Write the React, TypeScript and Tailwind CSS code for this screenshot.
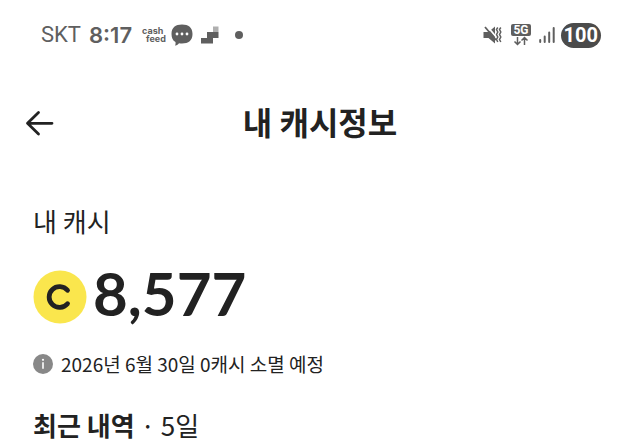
import React from 'react';

const StatusBar: React.FC = () => {
  return (
    <div className="flex items-center justify-between pl-[41px] pr-[39px] pt-5 text-[#5f5f5f]">
      <div className="flex items-center">
        <span className="font-[Roboto,sans-serif] text-[22px] leading-[30px]">SKT</span>
        <span className="ml-2 font-[Inter,sans-serif] text-[22px] leading-[30px] font-semibold">8:17</span>
        <div className="ml-[10px] flex flex-col font-[Inter,sans-serif] text-[9px] leading-[8px] font-bold">
          <span>cash</span>
          <span className="pl-1">feed</span>
        </div>
        <svg className="ml-[5px] h-[22px] w-[22px]" viewBox="0 0 22 22" aria-hidden="true">
          <path d="M11 .5C17.5.5 21.5 3.5 21.5 10c0 6.500-4 9.500-10.500 9.500-1 0-2-.1-3-.3-.8 1-1.900 1.900-3.800 2.500.4-1.200.5-2.400.3-3.600C1.700 16.500.5 13.700.5 10 .5 3.500 4.500.5 11 .5z" fill="currentColor" />
          <circle cx="6" cy="10" r="1.400" fill="#fff" />
          <circle cx="11" cy="10" r="1.400" fill="#fff" />
          <circle cx="16" cy="10" r="1.400" fill="#fff" />
        </svg>
        <svg className="ml-2 h-[18px] w-[18px]" viewBox="0 0 18 18" fill="currentColor" aria-hidden="true">
          <path d="M0 12h6V6h6v0h5.500v6H12v5.500H0z" />
          <path d="M12 .5h5.500V6H12z" opacity=".5" />
        </svg>
        <span className="ml-4 h-2 w-2 rounded-full bg-[#5f5f5f]" />
      </div>

      <div className="flex items-center">
        <svg className="h-[20px] w-[20px]" viewBox="0 0 20 20" fill="currentColor" aria-hidden="true">
          <path d="M.5 7h5L12 1.500v17L5.500 13h-5z" />
          <path d="M3.500 .5l11 13" stroke="#fff" strokeWidth="1.800" />
          <path d="M2 2l11 13" stroke="currentColor" strokeWidth="1.800" />
          <path d="M14.800 2.500l-1.300 2 1.300 2.500-1.300 2.500 1.300 2.500-1.300 2.500 1.300 2.500M17.800 2.500l-1.300 2 1.300 2.500-1.300 2.500 1.300 2.500-1.300 2.500 1.300 2.500" fill="none" stroke="currentColor" strokeWidth="1.500" />
        </svg>
        <div className="ml-2 flex flex-col items-center">
          <span className="rounded-xs bg-[#5f5f5f] px-[2px] font-[Roboto,sans-serif] text-[12px] leading-[12px] font-bold text-white">5G</span>
          <svg className="h-[10px] w-[16px]" viewBox="0 0 16 10" fill="none" stroke="currentColor" strokeWidth="1.500" aria-hidden="true">
            <path d="M4.500 1v7.500M1.500 5.500l3 3 3-3M11.500 9V1.500M8.500 4.500l3-3 3 3" />
          </svg>
        </div>
        <svg className="ml-2 h-[18px] w-[16px]" viewBox="0 0 16 18" stroke="currentColor" strokeWidth="2" strokeLinecap="round" aria-hidden="true">
          <path d="M1.200 14v2M5.700 10.500V16M10.200 6.500V16M14.700 2v14" />
        </svg>
        <span className="ml-[6px] rounded-full bg-[#4b4b4b] px-[3px] font-[Roboto,sans-serif] text-[20px] leading-[25px] font-bold text-white">100</span>
      </div>
    </div>
  );
};

const App: React.FC = () => {
  return (
    <div className="min-h-screen bg-white font-['Noto_Sans_CJK_KR',sans-serif] text-[#222]">
      <StatusBar />

      <header className="mt-[46px] grid grid-cols-[32px_1fr_32px] items-center px-6">
        <button type="button" aria-label="뒤로" className="h-8 w-8">
          <svg className="h-8 w-8" viewBox="0 0 32 32" fill="none" stroke="currentColor" strokeWidth="2.800" strokeLinecap="round" strokeLinejoin="round">
            <path d="M28 18.300H3.500M14.500 7.600L3.500 18.300l11 10.700" />
          </svg>
        </button>
        <h1 className="text-center text-[32px] leading-[50px] font-bold">내 캐시정보</h1>
      </header>

      <main className="px-[33px]">
        <h2 className="mt-[55px] text-[26px] leading-[40px]">내 캐시</h2>

        <div className="mt-5 flex items-center gap-[6px]">
          <svg className="h-[54px] w-[54px]" viewBox="0 0 54 54" aria-hidden="true">
            <circle cx="27" cy="27" r="26.500" fill="#fae64d" />
            <path d="M34.500 20.300a10.400 10.400 0 1 0 0 13.400" fill="none" stroke="#222" strokeWidth="4.800" strokeLinecap="round" />
          </svg>
          <strong className="pb-2 font-[Lato,sans-serif] text-[60px] leading-[64px] font-bold">8,577</strong>
        </div>

        <p className="mt-4 flex items-center gap-2 text-[19px] leading-[30px]">
          <svg className="h-5 w-5" viewBox="0 0 20 20" aria-hidden="true">
            <circle cx="10" cy="10" r="10" fill="#888" />
            <circle cx="10" cy="5.800" r="1.100" fill="#fff" />
            <path d="M10 8.300v6.500" stroke="#fff" strokeWidth="1.600" />
          </svg>
          2026년 6월 30일 0캐시 소멸 예정
        </p>

        <p className="mt-8 text-[26px] leading-[28px]">
          <strong className="font-bold">최근 내역</strong> · 5일
        </p>
      </main>
    </div>
  );
};

export default App;
